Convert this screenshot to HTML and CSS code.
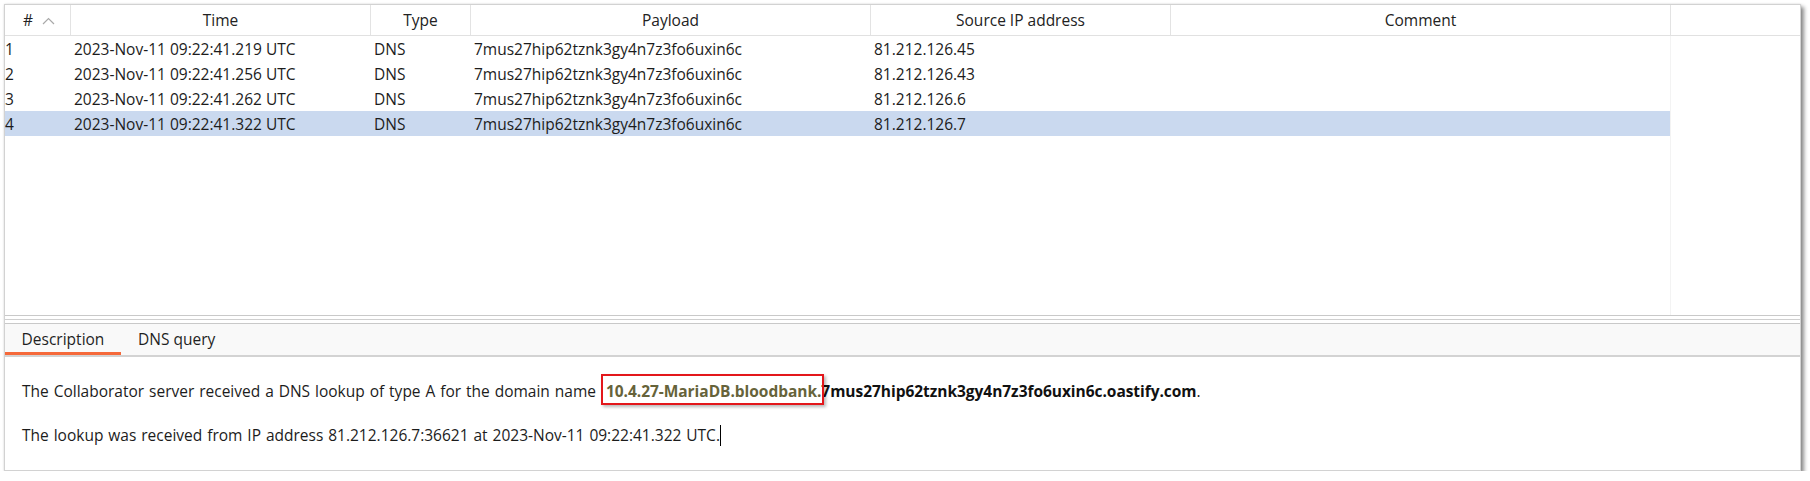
FILE: index.html
```html
<!DOCTYPE html>
<html lang="en">
<head>
<meta charset="utf-8">
<title>Collaborator interactions</title>
<link rel="stylesheet" href="styles.css">
</head>
<body>
<div class="window">
  <div class="table">
    <div class="thead">
      <div class="th sort">#<svg class="chev" width="13" height="8" viewBox="0 0 13 8"><polyline points="1,7 6.5,1.5 12,7" fill="none" stroke="#a9a9a9" stroke-width="1.2"/></svg></div>
      <div class="th">Time</div>
      <div class="th">Type</div>
      <div class="th">Payload</div>
      <div class="th">Source IP address</div>
      <div class="th">Comment</div>
      <div class="th filler"></div>
    </div>
    <div class="tbody">
      <div class="rows">
        <div class="row"><div class="td num">1</div><div class="td">2023-Nov-11 09:22:41.219 UTC</div><div class="td">DNS</div><div class="td">7mus27hip62tznk3gy4n7z3fo6uxin6c</div><div class="td">81.212.126.45</div><div class="td"></div></div>
        <div class="row"><div class="td num">2</div><div class="td">2023-Nov-11 09:22:41.256 UTC</div><div class="td">DNS</div><div class="td">7mus27hip62tznk3gy4n7z3fo6uxin6c</div><div class="td">81.212.126.43</div><div class="td"></div></div>
        <div class="row"><div class="td num">3</div><div class="td">2023-Nov-11 09:22:41.262 UTC</div><div class="td">DNS</div><div class="td">7mus27hip62tznk3gy4n7z3fo6uxin6c</div><div class="td">81.212.126.6</div><div class="td"></div></div>
        <div class="row selected"><div class="td num">4</div><div class="td">2023-Nov-11 09:22:41.322 UTC</div><div class="td">DNS</div><div class="td">7mus27hip62tznk3gy4n7z3fo6uxin6c</div><div class="td">81.212.126.7</div><div class="td"></div></div>
      </div>
    </div>
  </div>
  <div class="splitter"></div>
  <div class="tabs">
    <div class="tab active">Description</div>
    <div class="tab">DNS query</div>
  </div>
  <div class="content">
    <p class="line">The Collaborator server received a DNS lookup of type A for the domain name <span class="hl">10.4.27-MariaDB.bloodbank.</span><b>7mus27hip62tznk3gy4n7z3fo6uxin6c.oastify.com</b>.</p>
    <p class="line">The lookup was received from IP address 81.212.126.7:36621 at 2023-Nov-11 09:22:41.322 UTC.<span class="caret"></span></p>
  </div>
</div>
</body>
</html>
```
FILE: styles.css
```css
html, body {
  margin: 0;
  padding: 0;
  background: #ffffff;
}

body {
  font-family: "Open Sans", "Noto Sans", sans-serif;
  font-size: 15.5px;
  color: #1c1c1c;
}

.window {
  box-sizing: border-box;
  margin: 4px 0 0 4px;
  width: 1797px;
  height: 467px;
  border: 1px solid #d2d2d2;
  background: #ffffff;
  box-shadow: 3px 3px 4px rgba(0, 0, 0, 0.45), 0 0 2px rgba(0, 0, 0, 0.12);
  display: flex;
  flex-direction: column;
}

/* ---------- table ---------- */
.table {
  height: 310px;
  display: flex;
  flex-direction: column;
}

.thead {
  display: grid;
  grid-template-columns: 66px 300px 100px 400px 300px 500px 1fr;
  height: 31px;
  box-sizing: border-box;
  border-bottom: 1px solid #e1e1e1;
}

.th {
  box-sizing: border-box;
  border-right: 1px solid #e3e3e3;
  display: flex;
  align-items: center;
  justify-content: center;
  color: #222222;
  white-space: nowrap;
}

.th.filler {
  border-right: none;
}

.th.sort {
  gap: 9px;
  padding-left: 3px;
}

.chev {
  display: block;
  margin-top: 1px;
}

.tbody {
  flex: 1;
  display: flex;
}

.rows {
  width: 1665px;
  border-right: 1px solid #f3f3f3;
}

.row {
  display: grid;
  grid-template-columns: 66px 300px 100px 400px 300px 499px;
  height: 25px;
  align-items: center;
}

.row.selected {
  background: #cad9ef;
}

.td {
  padding-left: 3px;
  white-space: nowrap;
  overflow: hidden;
}

.td.num {
  padding-left: 0;
}

/* ---------- splitter + tabs ---------- */
.splitter {
  height: 7px;
  border-top: 1px solid #c9c9c9;
  border-bottom: 1px solid #c9c9c9;
  background: linear-gradient(#ffffff 0, #ffffff 3px, #cfcfcf 3px, #cfcfcf 4px, #ffffff 4px);
}

.tabs {
  display: flex;
  background: #f9f9f9;
  border-bottom: 2px solid #d3d3d3;
  box-sizing: border-box;
  height: 33px;
}

.tab {
  box-sizing: border-box;
  padding: 2px 17px 0 17px;
  display: flex;
  align-items: center;
  color: #1f1f1f;
  border-bottom: 3px solid transparent;
}

.tab.active {
  width: 116px;
  justify-content: center;
  padding: 2px 0 0 0;
  border-bottom-color: #f5693a;
}

/* ---------- description ---------- */
.content {
  flex: 1;
  padding: 23px 0 0 17px;
}

.line {
  margin: 0 0 22px 0;
  line-height: 22px;
  white-space: nowrap;
  word-spacing: 0.9px;
}

.line b {
  font-weight: 700;
  color: #111111;
  word-spacing: 0;
  letter-spacing: -0.04px;
}

.hl {
  position: relative;
  font-weight: 700;
  color: #66633a;
  margin-left: 5px;
  letter-spacing: -0.04px;
}

.hl::after {
  content: "";
  position: absolute;
  left: -5px;
  right: -3px;
  top: -6px;
  bottom: -3px;
  border: 2px solid #e3171b;
  box-shadow: 2px 2px 3px rgba(0, 0, 0, 0.28);
  pointer-events: none;
}

.caret {
  display: inline-block;
  width: 1px;
  height: 21px;
  background: #000000;
  vertical-align: -5px;
}
```
